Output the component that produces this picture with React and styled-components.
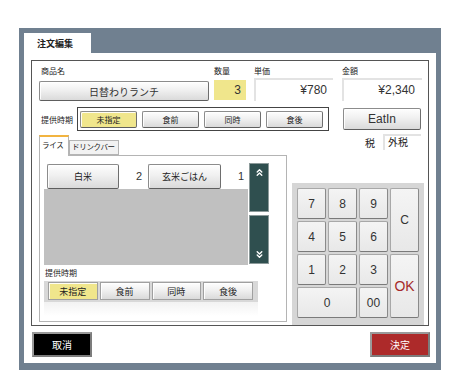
import styled, { createGlobalStyle } from "styled-components"
import { ChevronsUp, ChevronsDown } from "lucide-react"

const GlobalStyle = createGlobalStyle`
  body {
    margin: 0;
    background: #fff;
    font-family: "Liberation Sans", "Noto Sans CJK JP", sans-serif;
    color: #222;
  }
  * { box-sizing: border-box; }
`

const Frame = styled.div`
  margin: 28px 0 0 19px;
  width: 422px;
  height: 342px;
  background: #708090;
  padding: 5px 5px 7px 5px;
  display: flex;
  flex-direction: column;
`
const TabBar = styled.div`
  height: 20px;
  display: flex;
`
const WinTab = styled.div`
  width: 67px;
  background: #fff;
  font-size: 9px;
  font-weight: bold;
  line-height: 20px;
  padding-left: 13px;
  padding-top: 1px;
`
const Sheet = styled.div`
  flex: 1;
  background: #fff;
  padding: 7px 6px 0 7px;
  display: flex;
  flex-direction: column;
`
const Box = styled.div`
  width: 398px;
  height: 266px;
  border: 1px solid #555;
  padding: 4px 4px 0 7px;
  display: flex;
  flex-direction: column;
`
const TopRow = styled.div`
  display: flex;
  align-items: flex-start;
`
const Field = styled.div`
  width: ${p => p.$w}px;
  margin-right: ${p => p.$mr || 0}px;
  display: flex;
  flex-direction: column;
`
const Label = styled.div`
  font-size: 8px;
  line-height: 11px;
  height: 15px;
  padding-top: 1px;
  padding-left: ${p => p.$pl || 0}px;
  color: #222;
`
const RaisedButton = styled.div`
  display: flex;
  align-items: center;
  justify-content: center;
  border: 1px solid #8c8c8c;
  border-right-color: #6e6e6e;
  border-bottom-color: #5e5e5e;
  border-radius: 2px;
  background: ${p => (p.$on ? "#f0e68c" : "linear-gradient(#fefefe, #f0f0f0 45%, #dadada)")};
  box-shadow: inset 1px 1px 0 rgba(255, 255, 255, 0.9);
  font-size: ${p => p.$fs || 11}px;
  color: #222;
  white-space: nowrap;
`
const NameButton = styled(RaisedButton)`
  height: 20px;
  margin-top: 1px;
  font-size: 10px;
  color: #333;
`
const QtyBox = styled.div`
  height: 20px;
  background: #f0e68c;
  font-size: 12px;
  line-height: 20px;
  text-align: right;
  padding-right: 5px;
  color: #333;
`
const ValueBox = styled.div`
  height: 23px;
  margin-top: -2px;
  background: #fff;
  border-top: 2px solid #e3e3e3;
  border-left: 2px solid #e3e3e3;
  font-size: 12px;
  line-height: 20px;
  text-align: right;
  padding-right: ${p => p.$pr || 6}px;
  color: #333;
`
const MidRow = styled.div`
  display: flex;
  align-items: center;
  margin-top: 6px;
  height: 24px;
`
const RowLabel = styled.div`
  width: 38px;
  flex-shrink: 0;
  font-size: 8px;
  padding-left: 2px;
  white-space: nowrap;
`
const TimingGroup = styled.div`
  width: 252px;
  flex-shrink: 0;
  height: 24px;
  border: 1px solid #444;
  padding: 3px 5px 0 2px;
  display: flex;
  gap: 5px;
  align-items: flex-start;
`
const TimingButton = styled(RaisedButton)`
  flex: 1;
  height: 17px;
`
const EatIn = styled(RaisedButton)`
  width: 78px;
  height: 22px;
  margin-left: 14px;
  color: #333;
`
const Lower = styled.div`
  flex: 1;
  display: flex;
  margin-top: 3px;
`
const LeftCol = styled.div`
  width: 248px;
  display: flex;
  flex-direction: column;
`
const Tabs = styled.div`
  height: 21px;
  display: flex;
  align-items: flex-end;
`
const Tab = styled.div`
  width: ${p => p.$w}px;
  height: ${p => (p.$active ? 21 : 15)}px;
  padding-left: 2px;
  font-size: 7.5px;
  letter-spacing: -0.3px;
  white-space: nowrap;
  line-height: ${p => (p.$active ? 18 : 13)}px;
  border: 1px solid #b4b4b4;
  border-bottom: ${p => (p.$active ? "none" : "1px solid #b4b4b4")};
  border-top: ${p => (p.$active ? "2px solid #f2b440" : "1px solid #b4b4b4")};
  background: ${p => (p.$active ? "#fff" : "#f2f2f2")};
  margin-bottom: ${p => (p.$active ? -1 : 0)}px;
  position: relative;
  z-index: ${p => (p.$active ? 1 : 0)};
`
const Panel = styled.div`
  height: 167px;
  border: 1px solid #b4b4b4;
  background: #fff;
  padding: 6px 0 0 4px;
  display: flex;
  flex-direction: column;
`
const ListRow = styled.div`
  display: flex;
  height: 103px;
`
const List = styled.div`
  width: 204px;
  background: #c0c0c0;
`
const ItemRow = styled.div`
  height: 27px;
  background: #fff;
  display: grid;
  grid-template-columns: 99px 100px;
  column-gap: 2px;
  padding: 2px 0 0 3px;
`
const ItemCell = styled.div`
  display: flex;
  height: 25px;
`
const ItemButton = styled(RaisedButton)`
  flex: 1;
  font-size: 9px;
`
const Count = styled.div`
  width: 27px;
  font-size: 11px;
  line-height: 25px;
  text-align: right;
  padding-right: 4px;
  color: #333;
`
const ScrollCol = styled.div`
  width: 20px;
  margin-left: 1px;
  display: flex;
  flex-direction: column;
  gap: 3px;
  padding-top: 1px;
`
const ScrollButton = styled.div`
  height: 49px;
  background: #2f4f4f;
  border: 1px solid #8c9a9a;
  display: flex;
  justify-content: center;
  align-items: ${p => (p.$down ? "flex-end" : "flex-start")};
  padding: 3px 0;
  color: #fff;
`
const SubLabel = styled.div`
  font-size: 8px;
  line-height: 12px;
  margin-top: 3px;
  padding-left: 1px;
`
const ServeGroup = styled.div`
  width: 214px;
  height: 21px;
  margin-top: 1px;
  background: #d8d8d8;
  padding: 1px 5px 0 4px;
  display: flex;
  gap: 2px;
`
const ServeButton = styled(RaisedButton)`
  flex: 1;
  height: 18px;
  font-size: 9px;
  border-color: #a0a0a0;
  border-radius: 0;
`
const ServeFoot = styled.div`
  width: 214px;
  height: 14px;
  background: linear-gradient(#f2f2f2, #fff);
`
const RightCol = styled.div`
  width: 132px;
  margin-left: 5px;
  display: flex;
  flex-direction: column;
`
const TaxRow = styled.div`
  display: flex;
  justify-content: flex-end;
  align-items: center;
  height: 16px;
  padding-right: 3px;
`
const TaxLabel = styled.div`
  font-size: 10px;
  margin-right: 8px;
`
const TaxBox = styled.div`
  width: 38px;
  height: 16px;
  border-top: 2px solid #e3e3e3;
  border-left: 2px solid #e3e3e3;
  font-size: 10px;
  line-height: 14px;
  padding-left: 3px;
`
const Pad = styled.div`
  margin-top: auto;
  height: 142px;
  background: #d6d6d6;
  padding: 5px 5px 0 5px;
  display: grid;
  grid-template-columns: repeat(4, 29px);
  grid-template-rows: repeat(4, 31px);
  gap: 2px;
`
const Key = styled.div`
  grid-column: ${p => p.$col || "auto"};
  grid-row: ${p => p.$row || "auto"};
  display: flex;
  align-items: center;
  justify-content: center;
  background: linear-gradient(#f4f4f4, #e8e8e8);
  border: 1px solid #a8a8a8;
  border-right-color: #8a8a8a;
  border-bottom-color: #7a7a7a;
  border-radius: 2px;
  font-size: ${p => p.$fs || 12}px;
  color: ${p => p.$color || "#333"};
`
const Footer = styled.div`
  display: flex;
  justify-content: space-between;
  margin-top: 6px;
  padding-left: 1px;
`
const ActionButton = styled.div`
  width: 60px;
  height: 25px;
  background: ${p => p.$bg};
  border: 2px solid #9a9a9a;
  border-right-color: #7c7c7c;
  border-bottom-color: #7c7c7c;
  color: #fff;
  font-size: 10px;
  display: flex;
  align-items: center;
  justify-content: center;
`

const timings = ["未指定", "食前", "同時", "食後"]
const items = [
  { name: "白米", count: 2 },
  { name: "玄米ごはん", count: 1 },
]

export default function App() {
  return (
    <>
      <GlobalStyle />
      <Frame>
        <TabBar>
          <WinTab>注文編集</WinTab>
        </TabBar>
        <Sheet>
          <Box>
            <TopRow>
              <Field $w={170} $mr={5}>
                <Label $pl={2}>商品名</Label>
                <NameButton>日替わりランチ</NameButton>
              </Field>
              <Field $w={32} $mr={8}>
                <Label>数量</Label>
                <QtyBox>3</QtyBox>
              </Field>
              <Field $w={79} $mr={9}>
                <Label>単価</Label>
                <ValueBox>¥780</ValueBox>
              </Field>
              <Field $w={80}>
                <Label>金額</Label>
                <ValueBox $pr={7}>¥2,340</ValueBox>
              </Field>
            </TopRow>
            <MidRow>
              <RowLabel>提供時期</RowLabel>
              <TimingGroup>
                {timings.map((t, i) => (
                  <TimingButton key={t} $on={i === 0} $fs={8}>{t}</TimingButton>
                ))}
              </TimingGroup>
              <EatIn $fs={12}>EatIn</EatIn>
            </MidRow>
            <Lower>
              <LeftCol>
                <Tabs>
                  <Tab $active $w={30}>ライス</Tab>
                  <Tab $w={50}>ドリンクバー</Tab>
                </Tabs>
                <Panel>
                  <ListRow>
                    <List>
                      <ItemRow>
                        {items.map(it => (
                          <ItemCell key={it.name}>
                            <ItemButton>{it.name}</ItemButton>
                            <Count>{it.count}</Count>
                          </ItemCell>
                        ))}
                      </ItemRow>
                    </List>
                    <ScrollCol>
                      <ScrollButton>
                        <ChevronsUp size={11} strokeWidth={3} />
                      </ScrollButton>
                      <ScrollButton $down>
                        <ChevronsDown size={11} strokeWidth={3} />
                      </ScrollButton>
                    </ScrollCol>
                  </ListRow>
                  <SubLabel>提供時期</SubLabel>
                  <ServeGroup>
                    {timings.map((t, i) => (
                      <ServeButton key={t} $on={i === 0}>{t}</ServeButton>
                    ))}
                  </ServeGroup>
                  <ServeFoot />
                </Panel>
              </LeftCol>
              <RightCol>
                <TaxRow>
                  <TaxLabel>税</TaxLabel>
                  <TaxBox>外税</TaxBox>
                </TaxRow>
                <Pad>
                  <Key>7</Key>
                  <Key>8</Key>
                  <Key>9</Key>
                  <Key $col="4" $row="1 / 3">C</Key>
                  <Key>4</Key>
                  <Key>5</Key>
                  <Key>6</Key>
                  <Key>1</Key>
                  <Key>2</Key>
                  <Key>3</Key>
                  <Key $col="4" $row="3 / 5" $fs={14} $color="#a52a2a">OK</Key>
                  <Key $col="1 / 3">0</Key>
                  <Key>00</Key>
                </Pad>
              </RightCol>
            </Lower>
          </Box>
          <Footer>
            <ActionButton $bg="#000">取消</ActionButton>
            <ActionButton $bg="#ad2a2a">決定</ActionButton>
          </Footer>
        </Sheet>
      </Frame>
    </>
  )
}
